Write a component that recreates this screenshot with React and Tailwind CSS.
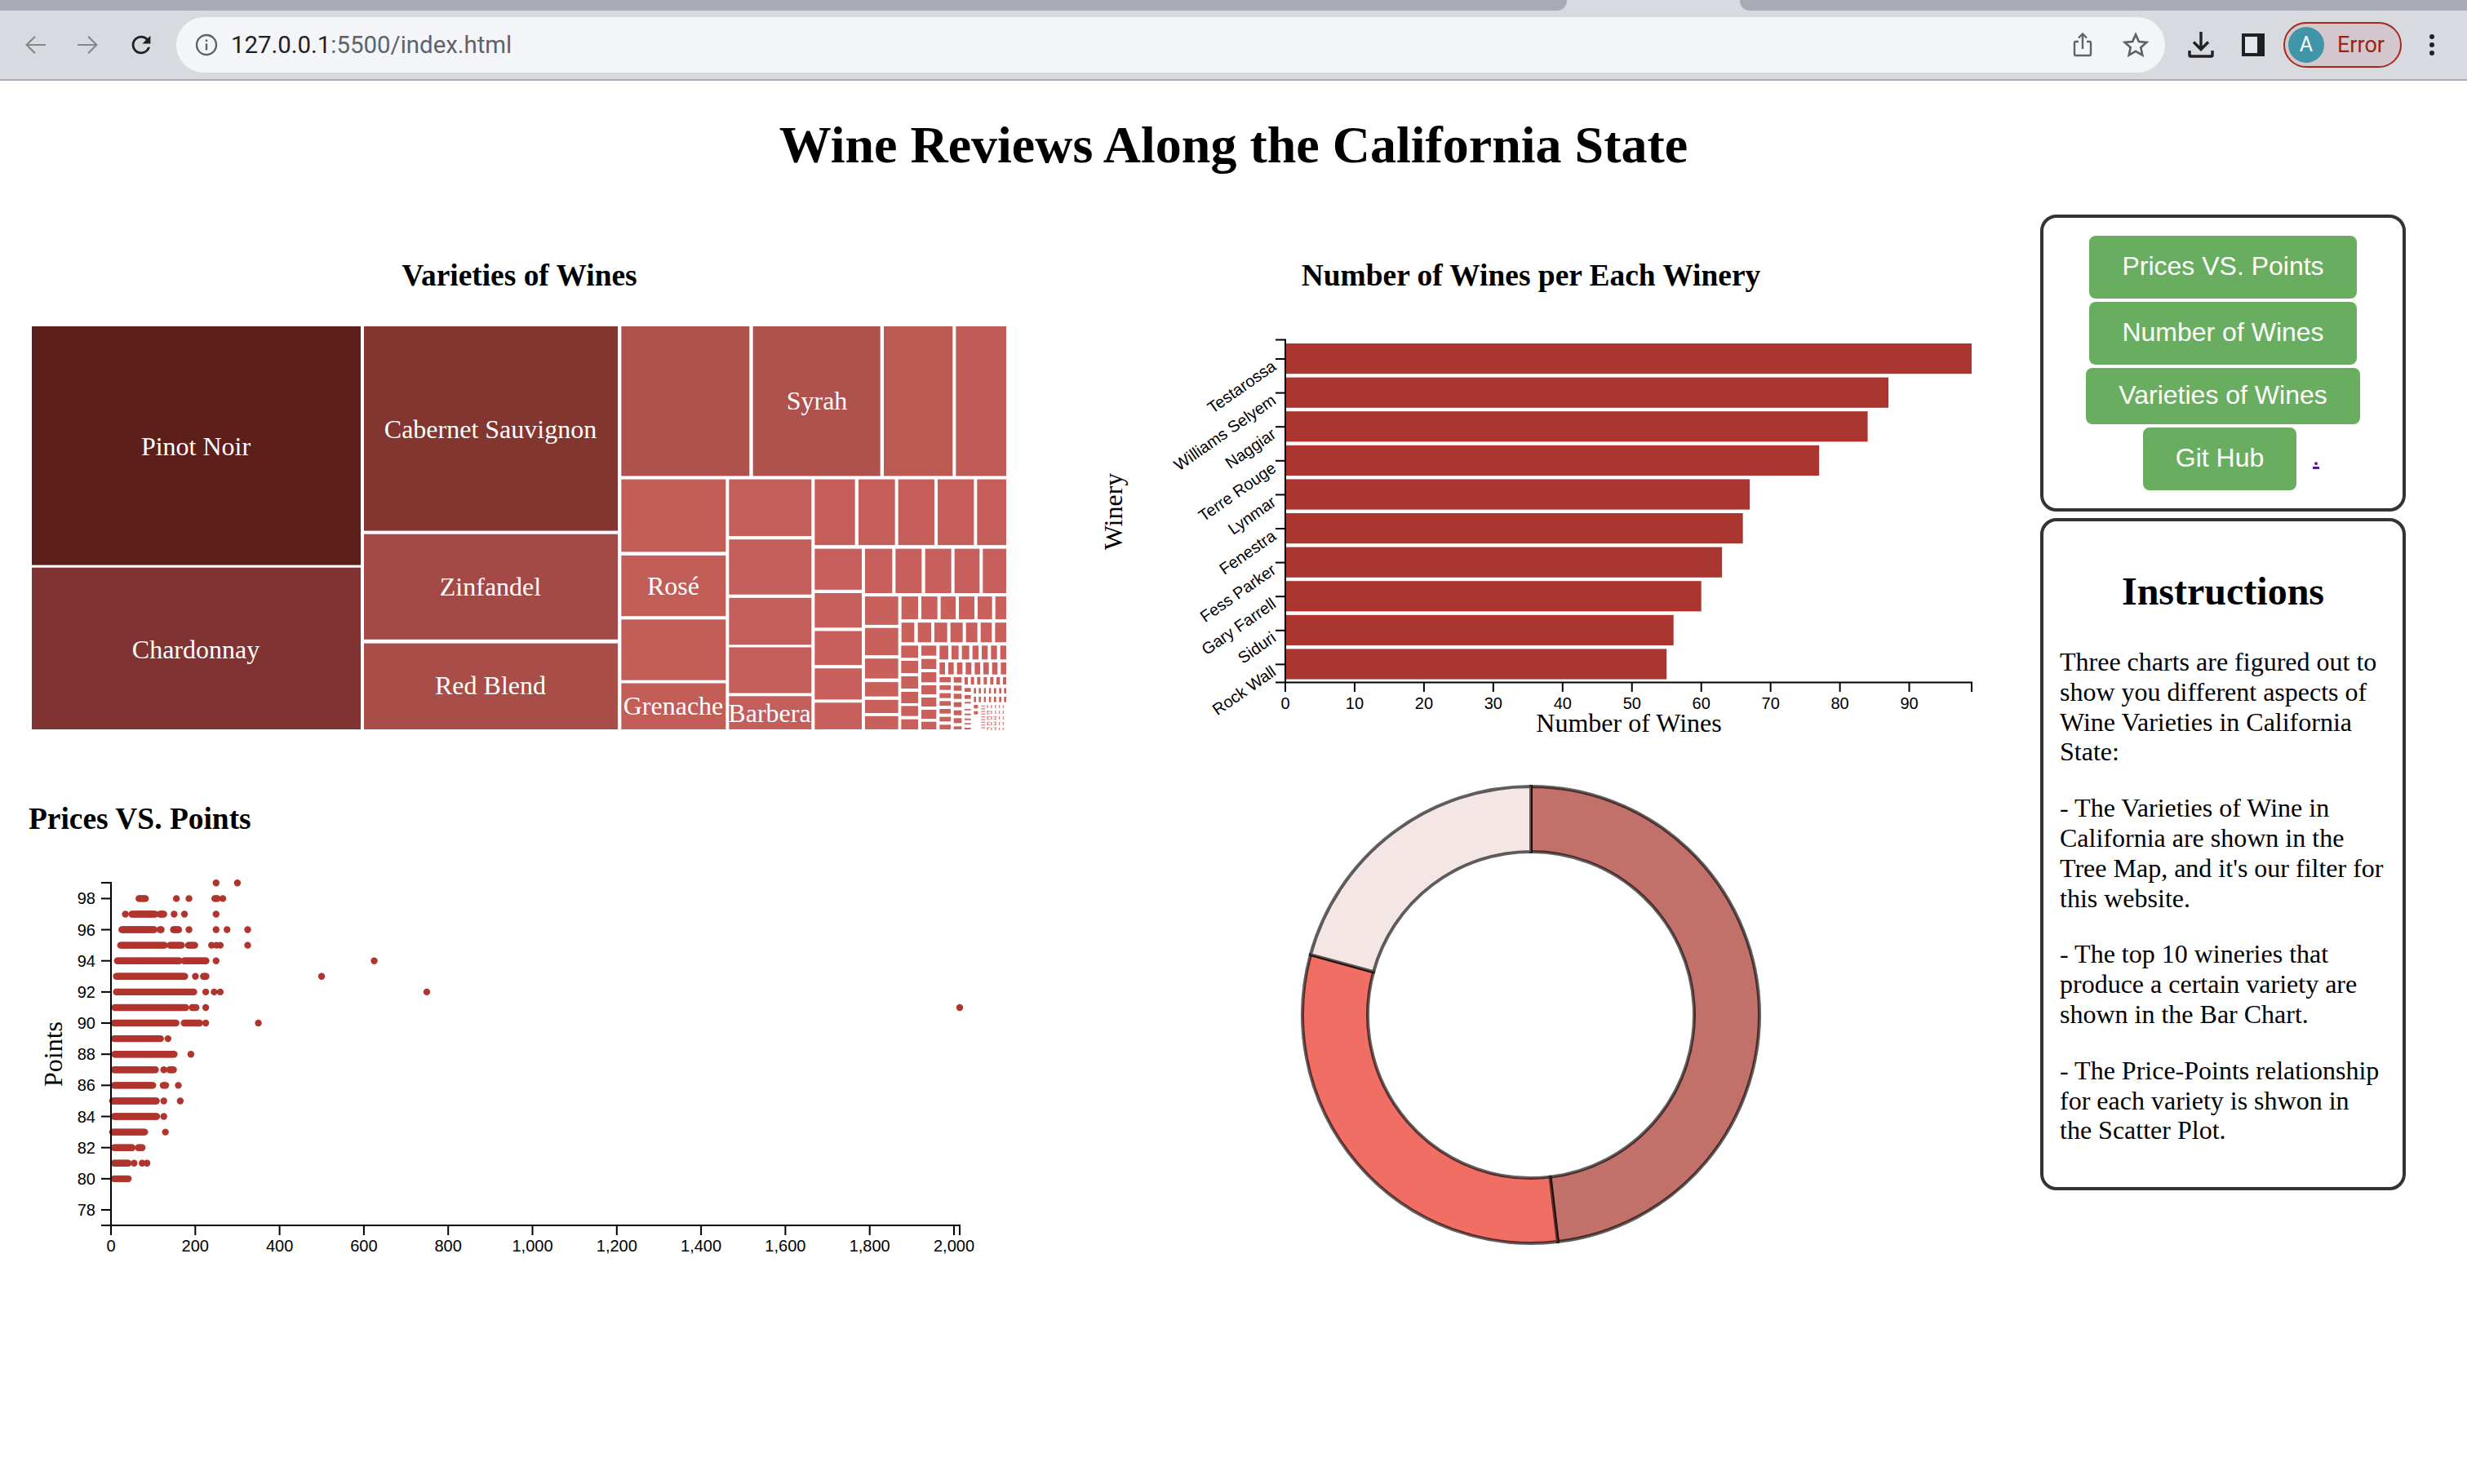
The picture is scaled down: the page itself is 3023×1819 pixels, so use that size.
import React from "react"

const serif = "font-['Liberation_Serif',serif]"
const sans = "font-['Liberation_Sans',sans-serif]"

// treemap cells, in page pixels
const zx = (v) => 740 + v / 3
const zy = (v) => 380 + v / 2.905
const fx = (v) => 1000 + v / 3
const fy = (v) => 700 + v / 3

const bigCells = [
  [39, 442, 400, 692.6, "#5c1f1a"],
  [39, 442, 695.7, 894, "#803330"],
  [446, 757, 400, 650.6, "#833530"],
  [446, 757, 654.7, 783.8, "#a34a46"],
  [446, 757, 788.6, 894, "#a94d49"],
]

const zoomCells = []
const addCol = (x0, x1, ys, fill) => ys.forEach(([a, b]) => zoomCells.push([x0, x1, a, b, fill]))
const addRow = (y0, y1, xs, fill) => xs.forEach(([a, b]) => zoomCells.push([a, b, y0, y1, fill]))

addRow(58, 591, [[64, 535], [548, 1016]], "#af514c")
addRow(58, 591, [[1029, 1282]], "#bc5a54")
addRow(58, 591, [[1294, 1479]], "#c05c57")
addCol(64, 448, [[603, 861], [874, 1090], [1102, 1318], [1329, 1493]], "#c25d58")
addCol(460, 763, [[603, 805], [817, 1013], [1025, 1192], [1201, 1364], [1375, 1493]], "#c45e5a")
addRow(603, 837, [[775, 923], [936, 1070], [1082, 1215], [1227, 1360], [1372, 1479]], "#c65f5b")
addCol(775, 948, [[850, 996], [1008, 1131], [1143, 1264], [1276, 1387], [1398, 1493]], "#c75f5c")
addRow(850, 1008, [[960, 1060], [1072, 1168], [1181, 1277], [1289, 1381], [1393, 1479]], "#c75f5c")
addCol(960, 1082, [[1020, 1121], [1132, 1229], [1241, 1312], [1325, 1376], [1388, 1435], [1446, 1493]], "#c8605c")
addRow(1020, 1101, [[1094, 1155], [1167, 1226], [1238, 1293], [1305, 1362], [1374, 1427], [1439, 1479]], "#c9605c")
addRow(1113, 1183, [[1094, 1141], [1154, 1203], [1215, 1262], [1274, 1319], [1331, 1373], [1385, 1426], [1438, 1479]], "#c9605c")

const fineCells = []
const fineCol = (x0, x1, ys) => ys.forEach(([a, b]) => fineCells.push([x0, x1, a, b]))
const fineRow = (y0, y1, xs) => xs.forEach(([a, b]) => fineCells.push([a, b, y0, y1]))
const fineXs = [[580, 588], [598, 606], [617, 624], [636, 643], [654, 662], [673, 681], [691, 699]]

fineCol(313, 375, [[274, 319], [330, 375], [387, 432], [444, 486], [496, 533], [545, 582]])
fineCol(387, 442, [[274, 311], [323, 360], [372, 409], [420, 453], [465, 498], [510, 543], [554, 582]])
fineRow(274, 325, [[454, 486], [498, 524], [536, 563], [575, 597], [609, 631], [643, 665], [677, 699]])
fineRow(336, 380, [[454, 474], [486, 506], [518, 538], [550, 571], [583, 603], [615, 635], [647, 667], [679, 699]])
fineCol(454, 495, [[390, 409], [420, 437], [449, 467], [478, 495], [507, 524], [536, 553], [565, 582]])
fineCol(506, 535, [[390, 410], [421, 440], [451, 470], [482, 500], [512, 530], [541, 559], [571, 582]])
fineRow(390, 417, [[546, 558], [569, 581], [592, 604], [616, 628], [640, 652], [663, 676], [687, 699]])
fineCol(546, 569, [[430, 444], [456, 470], [481, 487], [507, 512], [524, 530], [542, 548], [559, 564], [576, 582]])
fineRow(430, 450, fineXs)
fineRow(462, 482, fineXs)
fineCol(580, 595, [[492, 505], [515, 527]])

// the smallest cells are only specks at this size
const tinyCells = []
for (let y = 492; y < 582; y += 21) {
  for (let x = 628; x < 699; x += 14.5) tinyCells.push([x, y, 1.5, 4])
}
for (let y = 494; y < 582; y += 10) {
  tinyCells.push([607, y, 5, 1.5])
  if (y > 510) tinyCells.push([628, y, 4, 1])
  if (y > 530) tinyCells.push([652, y, 4, 1])
}

const treeLabels = [
  ["Pinot Noir", 240, 558],
  ["Chardonnay", 240, 807],
  ["Cabernet Sauvignon", 601, 537],
  ["Zinfandel", 601, 730],
  ["Red Blend", 601, 851],
  ["Syrah", 1001, 502],
  ["Rosé", 825, 729],
  ["Grenache", 825, 876],
  ["Barbera", 943, 885],
]

function TreeMap() {
  return (
    <svg viewBox="35 400 1205 495" className="block w-[1205px] h-[495px]">
      {bigCells.map(([a, b, c, d, fill], i) => (
        <rect key={i} x={a} y={c} width={b - a} height={d - c} fill={fill} />
      ))}
      {zoomCells.map(([a, b, c, d, fill], i) => (
        <rect key={i} x={zx(a)} y={zy(c)} width={(b - a) / 3} height={(d - c) / 2.905} fill={fill} />
      ))}
      {fineCells.map(([a, b, c, d], i) => (
        <rect key={i} x={fx(a)} y={fy(c)} width={(b - a) / 3} height={(d - c) / 3} fill="#c9605c" />
      ))}
      {tinyCells.map(([x, y, w, h], i) => (
        <rect key={i} x={fx(x)} y={fy(y)} width={w} height={h} fill="#dc8f8c" />
      ))}
      {treeLabels.map(([t, x, y]) => (
        <text key={t} x={x} y={y} textAnchor="middle" fill="#fff" fontSize="32" className={serif}>
          {t}
        </text>
      ))}
    </svg>
  )
}

const wineries = [
  ["Testarossa", 99],
  ["Williams Selyem", 87],
  ["Naggiar", 84],
  ["Terre Rouge", 77],
  ["Lynmar", 67],
  ["Fenestra", 66],
  ["Fess Parker", 63],
  ["Gary Farrell", 60],
  ["Siduri", 56],
  ["Rock Wall", 55],
]

function BarChart() {
  const x0 = 1575
  const unit = 8.495
  return (
    <svg viewBox="1330 400 1110 510" className="block w-[1110px] h-[510px]">
      {wineries.map(([name, v], i) => {
        const tickY = 440 + 41.6 * i
        return (
          <g key={name}>
            <rect x={x0} y={421 + 41.6 * i} width={v * unit} height={37.2} fill="#ab362f" />
            <line x1={x0 - 12} x2={x0} y1={tickY} y2={tickY} stroke="#000" strokeWidth="2" />
            <text
              x={1565}
              y={tickY + 12}
              textAnchor="end"
              fontSize="20"
              transform={`rotate(-35 1565 ${tickY + 12})`}
              className={sans}
            >
              {name}
            </text>
          </g>
        )
      })}
      <path d="M1563 416.5H1575V836.5H2416V848M1563 836.5H1575" fill="none" stroke="#000" strokeWidth="2" />
      {[0, 10, 20, 30, 40, 50, 60, 70, 80, 90].map((v) => (
        <g key={v}>
          <line x1={x0 + v * unit} x2={x0 + v * unit} y1={836} y2={848} stroke="#000" strokeWidth="2" />
          <text x={x0 + v * unit} y={869} textAnchor="middle" fontSize="20" className={sans}>
            {v}
          </text>
        </g>
      ))}
      <text x={1996} y={897} textAnchor="middle" fontSize="32" className={serif}>
        Number of Wines
      </text>
      <text x={1375} y={627} textAnchor="middle" fontSize="32" transform="rotate(-90 1375 627)" className={serif}>
        Winery
      </text>
    </svg>
  )
}

// each row: points, solid runs, single dots (x values as measured on the plot)
const scatterRows = [
  [99, [], [619, 685]],
  [98, [[380, 400], [615, 625]], [496, 535, 640]],
  [97, [[358, 430], [445, 458]], [338, 489, 521, 619]],
  [96, [[327, 430], [445, 452], [487, 505]], [535, 619, 653, 717]],
  [95, [[323, 460], [476, 512], [533, 555]], [605, 620, 632, 717]],
  [94, [[313, 505], [520, 590]], [619, 1109]],
  [93, [[310, 525], [580, 590]], [555, 946]],
  [92, [[310, 550]], [587, 613, 632, 1272]],
  [91, [[305, 525], [545, 558]], [587]],
  [90, [[303, 498], [520, 570]], [587, 750]],
  [89, [[303, 450]], [470]],
  [88, [[305, 490]], [541]],
  [87, [[303, 433], [475, 490]], [457]],
  [86, [[303, 425], [455, 465]], [502]],
  [85, [[298, 437]], [457, 508]],
  [84, [[303, 437]], [457]],
  [83, [[298, 398]], [462]],
  [82, [[303, 360], [378, 392]], []],
  [81, [[303, 348]], [365, 390, 405]],
  [80, [[303, 347]], []],
]

function ScatterPlot() {
  const px = (v) => 20 + v / 2.529
  const py = (p) => 1483 - (p - 78) * 19.08
  const dots = []
  scatterRows.forEach(([p, runs, singles]) => {
    runs.forEach(([a, b]) => {
      for (let v = a; v <= b; v += 4) dots.push([px(v), py(p)])
    })
    singles.forEach((v) => dots.push([px(v), py(p)]))
  })
  dots.push([1176, py(91)])
  const xTicks = [0, 200, 400, 600, 800, 1000, 1200, 1400, 1600, 1800, 2000]
  const yTicks = [78, 80, 82, 84, 86, 88, 90, 92, 94, 96, 98]
  return (
    <svg viewBox="35 1070 1205 480" className="block w-[1205px] h-[480px]">
      {dots.map(([x, y], i) => (
        <circle key={i} cx={x} cy={y} r="4.2" fill="#b0352e" />
      ))}
      <path d="M124 1082H136V1502M124 1502H1176V1514M136 1502V1514" fill="none" stroke="#000" strokeWidth="2" />
      {xTicks.map((v) => {
        const x = 136 + v * 0.5165
        return (
          <g key={v}>
            <line x1={x} x2={x} y1={1502} y2={1514} stroke="#000" strokeWidth="2" />
            <text x={x} y={1534} textAnchor="middle" fontSize="20" className={sans}>
              {v.toLocaleString("en-US")}
            </text>
          </g>
        )
      })}
      {yTicks.map((v) => (
        <g key={v}>
          <line x1={124} x2={136} y1={py(v)} y2={py(v)} stroke="#000" strokeWidth="2" />
          <text x={117} y={py(v) + 7} textAnchor="end" fontSize="20" className={sans}>
            {v}
          </text>
        </g>
      ))}
      <text x={76} y={1292} textAnchor="middle" fontSize="32" transform="rotate(-90 76 1292)" className={serif}>
        Points
      </text>
    </svg>
  )
}

function arcPath(from, to) {
  const cx = 1876
  const cy = 1244
  const R = 280
  const r = 200
  const pt = (rad, deg) => {
    const a = (deg * Math.PI) / 180
    return `${cx + rad * Math.sin(a)} ${cy - rad * Math.cos(a)}`
  }
  const large = to - from > 180 ? 1 : 0
  return `M${pt(R, from)}A${R} ${R} 0 ${large} 1 ${pt(R, to)}L${pt(r, to)}A${r} ${r} 0 ${large} 0 ${pt(r, from)}Z`
}

function Donut() {
  const slices = [
    [0, 173.25, "#c1706a"],
    [173.25, 285.3, "#f16e64"],
    [285.3, 360, "#f5e6e6"],
  ]
  return (
    <svg viewBox="1590 958 572 572" className="block w-[572px] h-[572px] ml-[260px] mt-[48px]">
      {slices.map(([a, b, fill]) => (
        <path key={a} d={arcPath(a, b)} fill={fill} stroke="#000" strokeOpacity="0.62" strokeWidth="4" />
      ))}
    </svg>
  )
}

function BrowserBar() {
  return (
    <div className="h-[99px] bg-[#d9dae0] border-b-2 border-[#adaeb3] font-['Roboto',sans-serif]">
      <div className="flex justify-between h-[13px]">
        <div className="w-[1920px] bg-[#a9aab5] rounded-br-[12px]"></div>
        <div className="w-[891px] bg-[#a9aab5] rounded-bl-[12px]"></div>
      </div>
      <div className="flex items-center h-[84px]">
        <svg viewBox="0 0 24 24" className="w-[26px] h-[26px] ml-[31px]" fill="none" stroke="#85878b" strokeWidth="2">
          <path d="M23 12H2M11 2.5L1.5 12 11 21.5" />
        </svg>
        <svg viewBox="0 0 24 24" className="w-[26px] h-[26px] ml-[37px]" fill="none" stroke="#85878b" strokeWidth="2">
          <path d="M1 12H22M13 2.5L22.5 12 13 21.5" />
        </svg>
        <svg viewBox="0 0 24 24" className="w-[34px] h-[34px] ml-[36px]" fill="#1f2023">
          <path d="M17.65 6.35A7.958 7.958 0 0012 4c-4.42 0-7.99 3.58-7.99 8s3.57 8 7.99 8c3.73 0 6.84-2.55 7.73-6h-2.08A5.99 5.99 0 0112 18c-3.31 0-6-2.69-6-6s2.69-6 6-6c1.66 0 3.14.69 4.22 1.78L13 11h7V4l-2.35 2.35z" />
        </svg>
        <div className="flex items-center ml-[26px] w-[2437px] h-[68px] rounded-full bg-[#f4f5f8]">
          <svg viewBox="0 0 28 28" className="w-[28px] h-[28px] ml-[23px]" fill="none" stroke="#5f6368" strokeWidth="2.4">
            <circle cx="14" cy="14" r="12" />
            <path d="M14 12.5V20.5M14 7.5V10" />
          </svg>
          <div className="ml-[16px] text-[29.4px] text-[#5f6368]">
            <span className="text-[#202124]">127.0.0.1</span>:5500/index.html
          </div>
          <svg viewBox="0 0 24 30" className="w-[24px] h-[30px] ml-auto" fill="none" stroke="#5f6368" strokeWidth="2.4">
            <path d="M7 11H3.5a1.5 1.5 0 00-1.5 1.5V26.5A1.5 1.5 0 003.500 28H20.500A1.500 1.500 0 0022 26.500V12.500A1.500 1.500 0 0020.500 11H17M12 20V2M7 6.500L12 1.500 17 6.500" />
          </svg>
          <svg viewBox="0 0 24 24" className="w-[32px] h-[32px] ml-[37px] mr-[20px]" fill="none" stroke="#5f6368" strokeWidth="2">
            <path d="M12 2.500L14.900 9 22 9.700 16.700 14.500 18.200 21.500 12 17.900 5.800 21.500 7.300 14.500 2 9.700 9.100 9Z" />
          </svg>
        </div>
        <svg viewBox="0 0 32 32" className="w-[32px] h-[32px] ml-[28px]" fill="none" stroke="#202124" strokeWidth="3.4">
          <path d="M16 0V21M7 12.500L16 21.500 25 12.500M2 23V28.500A1.500 1.500 0 003.500 30H28.500A1.500 1.500 0 0030 28.500V23" />
        </svg>
        <div className="flex justify-end ml-[34px] w-[28px] h-[28px] bg-[#1f2023] pl-[4px] pr-[9px] py-[4px]">
          <div className="w-full bg-[#e4e5ea]"></div>
        </div>
        <div className="flex items-center ml-[23px] w-[145px] h-[56px] rounded-full border-2 border-[#a52a1e] bg-[#d4c8ce] pl-[4px]">
          <div className="flex items-center justify-center w-[44px] h-[44px] rounded-full bg-[#4095a8] text-white text-[25px]">
            A
          </div>
          <span className="ml-[16px] text-[27px] text-[#9b2418]">Error</span>
        </div>
        <div className="flex flex-col gap-[4px] ml-[34px]">
          <div className="w-[6px] h-[6px] rounded-full bg-[#202124]"></div>
          <div className="w-[6px] h-[6px] rounded-full bg-[#202124]"></div>
          <div className="w-[6px] h-[6px] rounded-full bg-[#202124]"></div>
        </div>
      </div>
    </div>
  )
}

const greenBtn = `flex items-center justify-center rounded-[8px] bg-[#69ae60] text-white text-[32px] pb-[3px] ${sans}`

function Sidebar() {
  return (
    <div className="flex flex-col gap-[8px] w-[448px]">
      <div className="flex flex-col items-center gap-[4px] border-4 border-[#333] rounded-[20px] pt-[22px] pb-[22px]">
        <div className={`${greenBtn} w-[328px] h-[77px]`}>Prices VS. Points</div>
        <div className={`${greenBtn} w-[328px] h-[77px]`}>Number of Wines</div>
        <div className={`${greenBtn} w-[336px] h-[69px]`}>Varieties of Wines</div>
        <div className="flex items-end gap-[20px] pl-[20px]">
          <div className={`${greenBtn} w-[188px] h-[77px]`}>Git Hub</div>
          <a href="#" className={`mb-[18px] text-[32px] text-[#551a8b] underline ${serif}`}>
            .
          </a>
        </div>
      </div>
      <div className={`flex flex-col gap-[32px] border-4 border-[#333] rounded-[20px] px-[20px] pt-[58px] pb-[51px] text-[32px] leading-[36.8px] ${serif}`}>
        <h2 className="text-[48px] font-bold text-center leading-[55px] mb-[9px]">Instructions</h2>
        <p>Three charts are figured out to show you different aspects of Wine Varieties in California State:</p>
        <p>- The Varieties of Wine in California are shown in the Tree Map, and it's our filter for this website.</p>
        <p>- The top 10 wineries that produce a certain variety are shown in the Bar Chart.</p>
        <p>- The Price-Points relationship for each variety is shwon in the Scatter Plot.</p>
      </div>
    </div>
  )
}

export default function App() {
  return (
    <div className={`min-h-[1819px] bg-white text-black ${serif}`}>
      <BrowserBar />
      <h1 className="mt-[42px] text-center text-[64px] font-bold leading-[74px]">
        Wine Reviews Along the California State
      </h1>
      <div className="flex mt-[48px]">
        <div className="w-[1295px] ml-[35px] pt-[53px]">
          <h3 className="w-[1203px] h-[84px] text-center text-[37.44px] font-bold leading-[43px]">Varieties of Wines</h3>
          <TreeMap />
          <h3 className="h-[88px] mt-[87px] text-[37.44px] font-bold leading-[43px]">Prices VS. Points</h3>
          <ScatterPlot />
        </div>
        <div className="w-[1170px] pt-[53px]">
          <h3 className="w-[1092px] h-[84px] text-center text-[37.44px] font-bold leading-[43px]">
            Number of Wines per Each Winery
          </h3>
          <BarChart />
          <Donut />
        </div>
        <Sidebar />
      </div>
    </div>
  )
}
